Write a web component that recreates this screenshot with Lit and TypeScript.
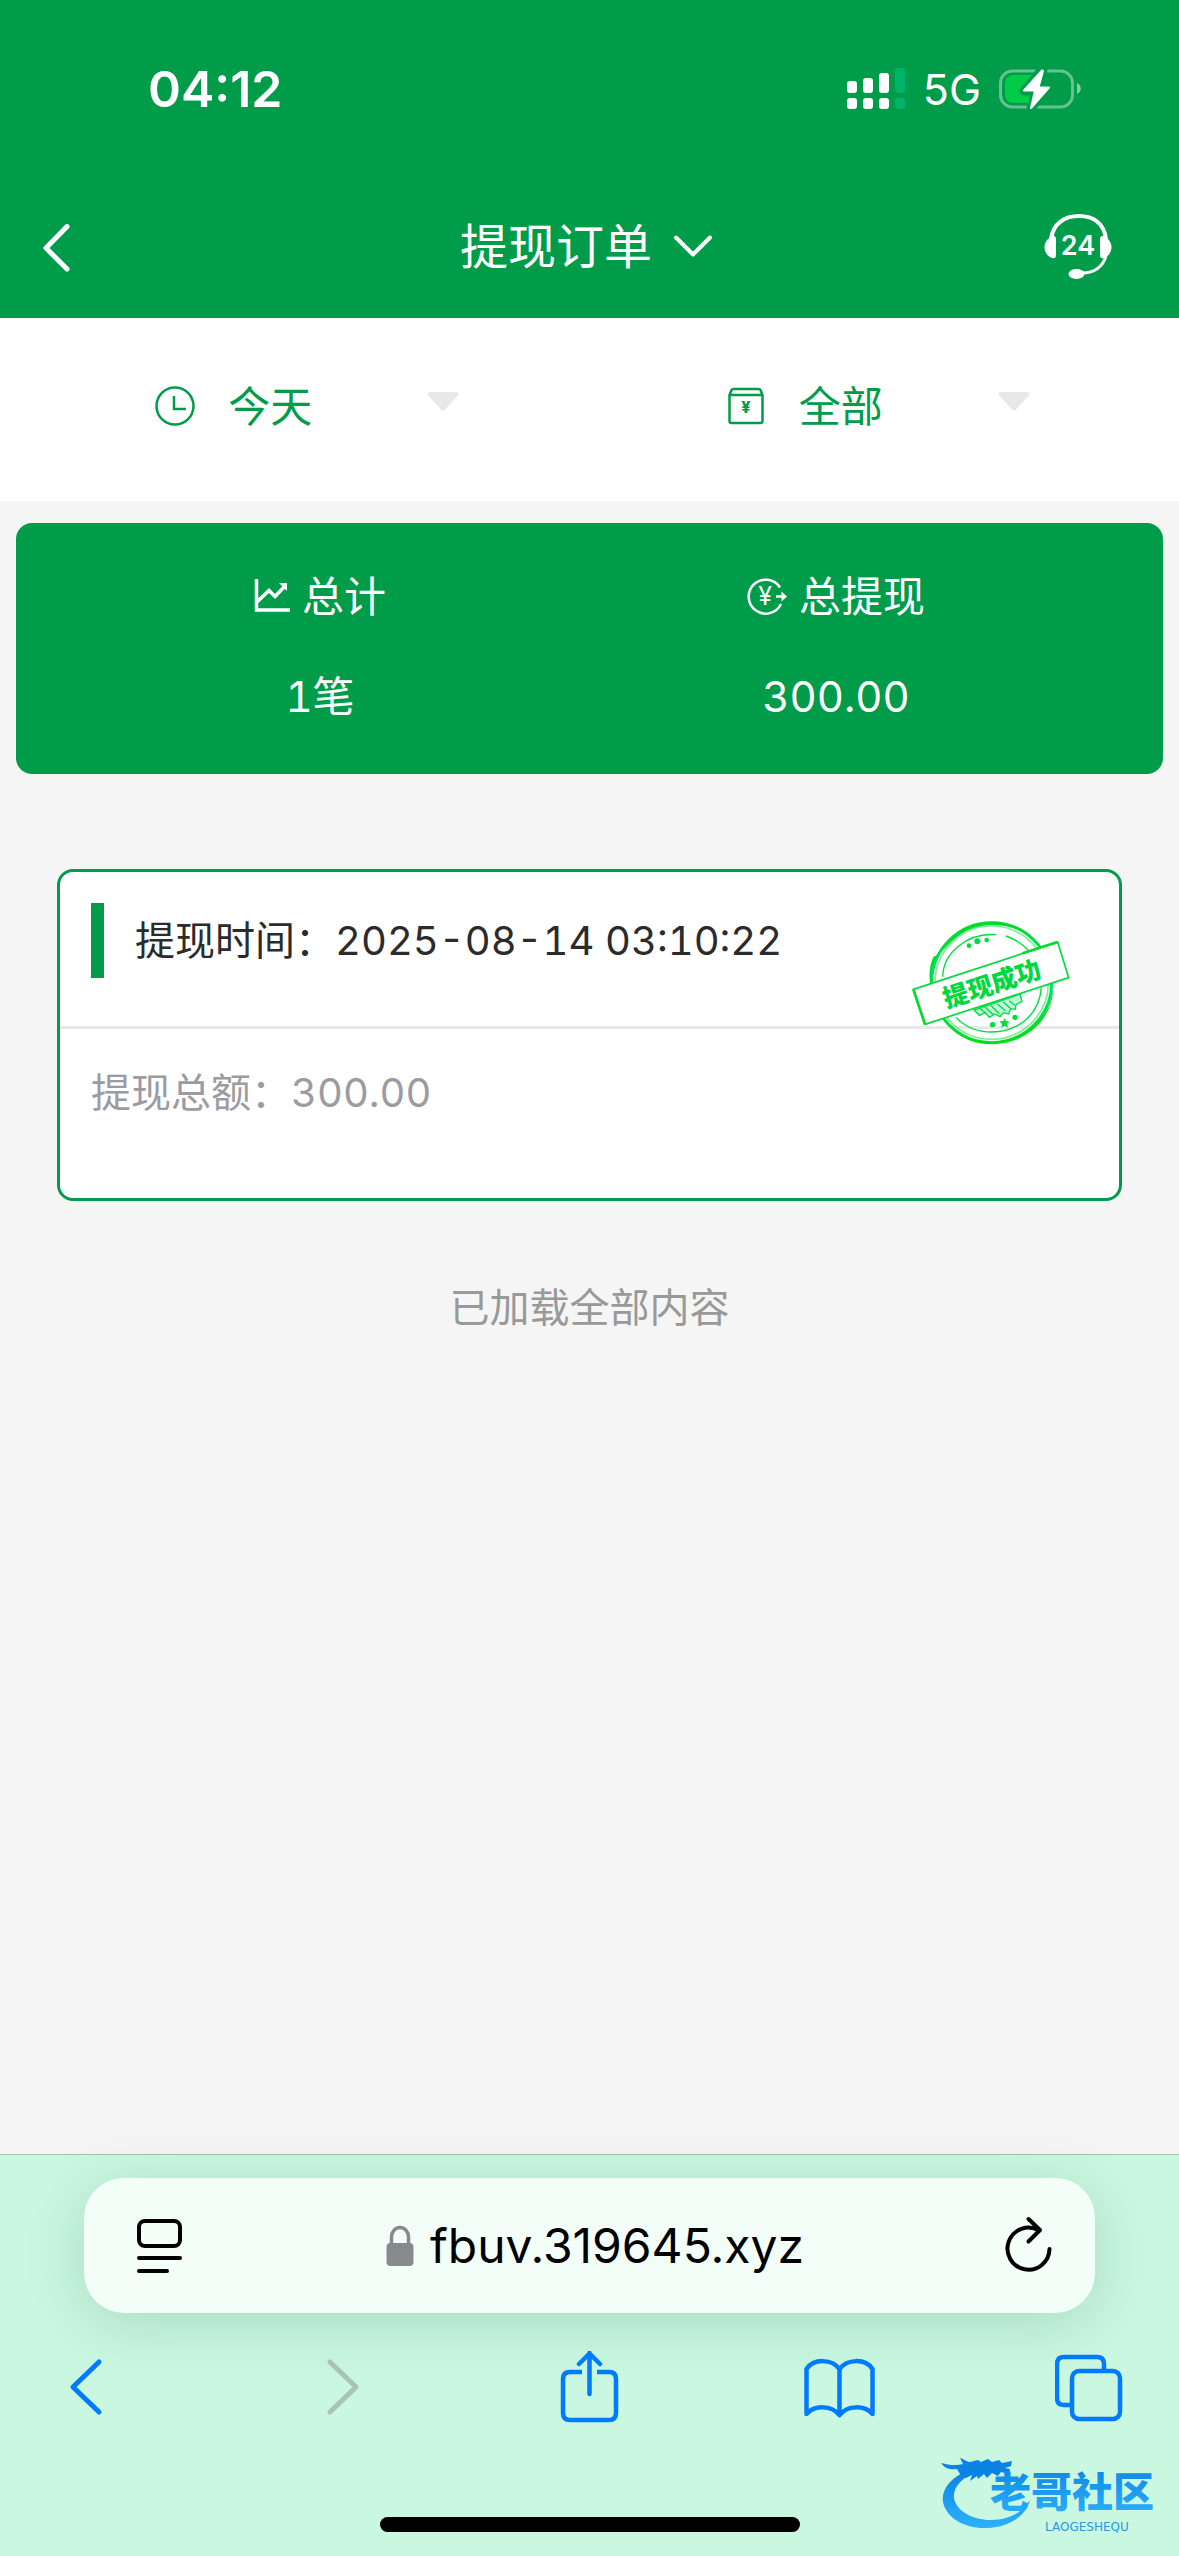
import { LitElement, html, css, svg } from "lit";
import { customElement, property } from "lit/decorators.js";

interface Order {
  time: string;
  amount: string;
}

const iconFont = "Inter, 'Noto Sans CJK SC', sans-serif";

@customElement("status-bar")
class StatusBar extends LitElement {
  static styles = css`
    :host {
      display: flex;
      align-items: center;
      justify-content: space-between;
      height: 178px;
      padding: 0 98px 0 148px;
      color: #fff;
    }
    .time {
      font-size: 50px;
      line-height: 60px;
      font-weight: 600;
    }
    .right {
      display: flex;
      align-items: center;
      gap: 18px;
    }
    .net {
      font-size: 43px;
      line-height: 52px;
    }
    svg {
      display: block;
    }
  `;

  render() {
    const tops = [13, 10, 5, 0];
    return html`
      <span class="time">04:12</span>
      <div class="right">
        <svg width="58" height="42" viewBox="0 0 58 42">
          ${tops.map(
            (top, i) => svg`
              <g fill=${i < 3 ? "#fff" : "#00b36b"}>
                <rect x=${i * 16} y=${top} width="10" height=${25 - top} rx="3"></rect>
                <rect x=${i * 16} y="30" width="10" height="11" rx="3"></rect>
              </g>`
          )}
        </svg>
        <span class="net">5G</span>
        <svg width="82" height="42" viewBox="0 0 82 42">
          <rect x="1.5" y="3" width="72" height="36" rx="12" fill="none" stroke="#fff" stroke-opacity=".4" stroke-width="3"></rect>
          <path d="M78 15v11c5-2 5-9 0-11z" fill="#fff" fill-opacity=".5"></path>
          <path d="M14 7h20v28H14a8 8 0 0 1-8-8V15a8 8 0 0 1 8-8z" fill="#00cc47"></path>
          <path d="M43 1.500 25 23h12L32 40 50 18.500H39L44 2z" fill="#fff" stroke="#009c49" stroke-width="9" stroke-linejoin="round"></path>
          <path d="M43 2.500 25 22.500H36L32 40 50 19.500H39.500L44 3z" fill="#fff" stroke="#fff" stroke-width="2" stroke-linejoin="round"></path>
        </svg>
      </div>
    `;
  }
}

@customElement("page-header")
class PageHeader extends LitElement {
  @property() heading = "";

  static styles = css`
    :host {
      display: grid;
      grid-template-columns: 1fr auto 1fr;
      align-items: center;
      height: 138px;
      padding: 0 66px 2px 39px;
      color: #fff;
    }
    button {
      padding: 0;
      border: 0;
      background: none;
      color: inherit;
      font: inherit;
      cursor: pointer;
    }
    svg {
      display: block;
    }
    .title {
      display: flex;
      align-items: center;
      gap: 20px;
      margin-left: 22px;
    }
    h1 {
      margin: 0;
      font-size: 48px;
      line-height: 60px;
      font-weight: 400;
    }
    .back {
      justify-self: start;
    }
    .service {
      justify-self: end;
    }
  `;

  render() {
    return html`
      <button class="back" aria-label="返回">
        <svg width="34" height="50" viewBox="0 0 34 50" fill="none" stroke="#fff" stroke-width="5" stroke-linecap="round" stroke-linejoin="round">
          <path d="M28 4.500 7 26 28 47"></path>
        </svg>
      </button>
      <button class="title">
        <h1>${this.heading}</h1>
        <svg width="42" height="26" viewBox="0 0 42 26" fill="none" stroke="#fff" stroke-width="4" stroke-linecap="round" stroke-linejoin="round">
          <path d="M4 3.500 21 20.500 38 3.500"></path>
        </svg>
      </button>
      <button class="service" aria-label="客服">
        <svg width="70" height="68" viewBox="0 0 70 68" fill="none" stroke="#fff">
          <path d="M8 26C10 11 21 3 36 3s25 8 27 23" stroke-width="4"></path>
          <path d="M63 43c-3 10-11 17-24 17" stroke-width="3"></path>
          <path d="M9 23.500q4-2 4 3v15q0 5-4 3.500C4 43 1.500 39 1.500 34S5 25 9 23.500zM61 23.500q-4-2-4 3v15q0 5 4 3.500c5-2 7.500-6 7.500-11S65 25 61 23.500z" fill="#fff" stroke="none"></path>
          <ellipse cx="33.500" cy="61" rx="8" ry="5" fill="#fff" stroke="none"></ellipse>
          <text x="35" y="42" text-anchor="middle" font-family=${iconFont} font-weight="600" font-size="27" fill="#fff" stroke="none">24</text>
        </svg>
      </button>
    `;
  }
}

@customElement("order-filters")
class OrderFilters extends LitElement {
  static styles = css`
    :host {
      display: grid;
      grid-template-columns: 1fr 1fr;
      padding: 60px 16px 67px 22px;
      background: #fff;
    }
    .filter {
      display: flex;
      align-items: center;
      justify-content: center;
      height: 56px;
      color: #009c49;
    }
    .icon {
      margin-right: 33px;
    }
    select {
      appearance: none;
      width: 199px;
      height: 56px;
      padding: 0;
      border: 0;
      background: none;
      color: inherit;
      font-family: inherit;
      font-size: 42px;
    }
    .arrow {
      margin-bottom: 10px;
    }
    svg {
      display: block;
    }
  `;

  private arrow() {
    return html`
      <svg class="arrow" width="32" height="20" viewBox="0 0 32 20">
        <path d="M4 1h24c3.500 0 4.500 2 2.500 4L18.500 18c-1.500 2-3.500 2-5 0L1.500 5C-.5 3 .5 1 4 1z" fill="#e8e8e8"></path>
      </svg>
    `;
  }

  render() {
    return html`
      <label class="filter">
        <svg class="icon" width="40" height="40" viewBox="0 0 40 40" fill="none" stroke="currentColor">
          <circle cx="20" cy="20" r="18.500" stroke-width="2.500"></circle>
          <path d="M19 10v13h12" stroke-width="2.500"></path>
        </svg>
        <select aria-label="日期">
          <option>今天</option>
        </select>
        ${this.arrow()}
      </label>
      <label class="filter">
        <svg class="icon" width="40" height="40" viewBox="0 0 40 40" fill="none" stroke="currentColor" stroke-width="2.500">
          <path d="M3.500 9 5.500 4q.5-1 2-1h25q1.500 0 2 1l2 5v26q0 2-2 2h-29q-2 0-2-2zM3.500 9h33"></path>
          <text x="20" y="27" text-anchor="middle" font-family=${iconFont} font-weight="800" font-size="16" fill="currentColor" stroke="none">¥</text>
        </svg>
        <select aria-label="类型">
          <option>全部</option>
        </select>
        ${this.arrow()}
      </label>
    `;
  }
}

@customElement("order-summary")
class OrderSummary extends LitElement {
  @property() count = "";
  @property() total = "";

  static styles = css`
    :host {
      display: grid;
      grid-template-columns: 1fr 1fr;
      margin: 22px 16px 0;
      padding: 44px 69px 47px 46px;
      border-radius: 16px;
      background: #009c49;
      color: #fff;
      font-size: 42px;
      line-height: 60px;
      font-variant-numeric: tabular-nums;
    }
    .item {
      display: flex;
      flex-direction: column;
      align-items: center;
      gap: 40px;
    }
    .label {
      display: flex;
      align-items: center;
      gap: 12px;
    }
    svg {
      display: block;
    }
  `;

  render() {
    return html`
      <div class="item">
        <div class="label">
          <svg width="36" height="36" viewBox="0 0 36 36" fill="none" stroke="#fff" stroke-width="3.500">
            <path d="M2.500 0v31H36M3 23 15 11.500 21 17.500 32 6"></path>
            <path d="M25 4h8v8z" fill="#fff" stroke="none"></path>
          </svg>
          <span>总计</span>
        </div>
        <div>${this.count}笔</div>
      </div>
      <div class="item">
        <div class="label">
          <svg width="40" height="38" viewBox="0 0 40 38" fill="none" stroke="#fff" stroke-width="2.500">
            <path d="M33 9.500A17 17 0 1 0 34 26"></path>
            <path d="M29 18.500h8"></path>
            <path d="M34.500 13.500 40 18.500l-5.500 5z" fill="#fff" stroke="none"></path>
            <text x="18" y="27" text-anchor="middle" font-family=${iconFont} font-size="25" fill="#fff" stroke="none">¥</text>
          </svg>
          <span>总提现</span>
        </div>
        <div>${this.total}</div>
      </div>
    `;
  }
}

@customElement("order-card")
class OrderCard extends LitElement {
  @property({ attribute: false }) order: Order = { time: "", amount: "" };

  static styles = css`
    :host {
      display: block;
      position: relative;
      margin: 95px 57px 0;
      border: 3px solid #009c49;
      border-radius: 16px;
      background: #fff;
      font-size: 40px;
      line-height: 56px;
      font-variant-numeric: tabular-nums;
    }
    .head {
      display: flex;
      align-items: center;
      gap: 31px;
      padding: 31px 31px 48px;
      border-bottom: 3px solid #e8e8e8;
      color: #2b2b2b;
    }
    .bar {
      width: 13px;
      height: 75px;
      background: #009c49;
    }
    .body {
      padding: 36px 31px 77px;
      color: #9b9ba1;
    }
    .stamp {
      position: absolute;
      top: 49px;
      right: 49px;
    }
  `;

  render() {
    return html`
      <div class="head">
        <span class="bar"></span>
        <span>提现时间：${this.order.time}</span>
      </div>
      <div class="body">提现总额：${this.order.amount}</div>
      <svg class="stamp" width="158" height="124" viewBox="98 185 474 372" fill="none" stroke="#00dc3c" role="img" aria-label="提现成功">
        <defs>
          <linearGradient id="ink" x1="0" y1="0" x2="0" y2="1">
            <stop offset="0" stop-color="#00dc28"></stop>
            <stop offset=".5" stop-color="#00e070"></stop>
            <stop offset="1" stop-color="#00e018"></stop>
          </linearGradient>
        </defs>
        <circle cx="337" cy="370" r="180" stroke="url(#ink)" stroke-width="9"></circle>
        <circle cx="337" cy="370" r="170" stroke-width="5" stroke-opacity=".5"></circle>
        <path d="M157 372c-4-34 2-60 18-86l-12 6c-12 22-14 50-11 80z" fill="#00dc28" stroke="none"></path>
        <path d="M190 275c24-45 75-82 140-85 35-1 62 5 92 20-60-18-110-18-155 2-34 16-55 38-77 63z" fill="#00dc28" stroke="none"></path>
        <path d="M360 545c60-8 128-50 152-112l8-44c4 70-60 155-160 162z" fill="#00e018" stroke="none"></path>
        <path d="M190 352c2-70 70-132 160-126M380 230c34 12 56 28 72 50M486 384c-6 90-80 134-148 134-46 0-80-14-108-44" stroke-width="4"></path>
        <g fill="#00dc3c" stroke="none">
          <circle cx="269" cy="259" r="7"></circle>
          <circle cx="294" cy="246" r="9"></circle>
          <circle cx="322" cy="242" r="7"></circle>
          <circle cx="340" cy="496" r="8"></circle>
          <path d="m376 476 4 10 11 0-8 8 3 11-10-6-10 6 2-11-8-8 12-1z"></path>
          <circle cx="407" cy="474" r="8"></circle>
        </g>
        <path d="M284 452 300 468 318 460 330 474 346 464 362 472 372 460 388 464 394 448 408 450 410 436 428 426 422 404z" fill="#00e070" fill-opacity=".25" stroke-width="4"></path>
        <path d="m302 448 18 14m-4-20 26 24m-8-28 26 26m-6-30 24 20m-6-26 20 18m-2-22 16 14" stroke-width="4"></path>
        <path d="M102 390 535 248 568 355 137 495z" fill="#fff" stroke-width="5"></path>
        <path d="M102 390 137 495M430 282 535 248" stroke="#00dc28" stroke-width="8"></path>
        <text x="338" y="401" text-anchor="middle" transform="rotate(-18 338 374)" font-family="'Noto Sans CJK SC', sans-serif" font-weight="900" font-size="76" fill="#00d840" stroke="none">提现成功</text>
      </svg>
    `;
  }
}

@customElement("browser-bar")
class BrowserBar extends LitElement {
  static styles = css`
    :host {
      display: block;
      position: relative;
      padding: 23px 52px 24px;
      border-top: 1px solid #9fc3b1;
      background: #c9f7e0;
    }
    button {
      padding: 0;
      border: 0;
      background: none;
      cursor: pointer;
    }
    svg {
      display: block;
    }
    .field {
      display: flex;
      align-items: center;
      justify-content: space-between;
      height: 135px;
      margin: 0 32px;
      padding: 0 42px 0 51px;
      border-radius: 40px;
      background: #f4fef9;
      box-shadow: 0 10px 60px rgba(0, 60, 30, 0.15);
    }
    .address {
      display: flex;
      align-items: center;
      gap: 16px;
      color: #000;
      font-size: 48px;
      line-height: 60px;
      text-decoration: none;
    }
    .tools {
      display: flex;
      justify-content: space-between;
      margin-top: 38px;
    }
    .home {
      width: 36%;
      min-width: 420px;
      height: 15px;
      margin: 94px auto 0;
      border-radius: 8px;
      background: #000;
    }
    .mark {
      position: absolute;
      right: 14px;
      bottom: 22px;
    }
  `;

  render() {
    return html`
      <div class="field">
        <button aria-label="阅读器">
          <svg width="50" height="60" viewBox="0 0 50 60" fill="none" stroke="#000" stroke-width="4" stroke-linecap="round">
            <rect x="4" y="5" width="41" height="25" rx="6"></rect>
            <path d="M4 42h41M4 55h28"></path>
          </svg>
        </button>
        <a class="address" href="#">
          <svg width="28" height="42" viewBox="0 0 28 42">
            <path d="M5.500 20v-8a8.500 9.500 0 0 1 17 0v8" fill="none" stroke="#868a8d" stroke-width="3.500"></path>
            <rect x="0.500" y="18" width="27" height="23" rx="4" fill="#868a8d"></rect>
          </svg>
          <span>fbuv.319645.xyz</span>
        </a>
        <button aria-label="刷新">
          <svg width="48" height="60" viewBox="0 0 48 60" fill="none" stroke="#000" stroke-width="4" stroke-linecap="round" stroke-linejoin="round">
            <path d="M34 14.500A21 21 0 1 0 44.500 33"></path>
            <path d="M23.500 3 35 14 23.500 25.500"></path>
          </svg>
        </button>
      </div>
      <nav class="tools">
        <button aria-label="后退">
          <svg width="72" height="72" viewBox="0 0 72 72" fill="none" stroke="#007aff" stroke-width="5" stroke-linecap="round" stroke-linejoin="round">
            <path d="M47 11 21 36 47 61"></path>
          </svg>
        </button>
        <button aria-label="前进">
          <svg width="72" height="72" viewBox="0 0 72 72" fill="none" stroke="#a9c3b6" stroke-width="5" stroke-linecap="round" stroke-linejoin="round">
            <path d="M27 11 53 36 27 61"></path>
          </svg>
        </button>
        <button aria-label="分享">
          <svg width="72" height="72" viewBox="0 0 72 72" fill="none" stroke="#007aff" stroke-width="4.500" stroke-linecap="round" stroke-linejoin="round">
            <path d="M28 21h-12q-7 0-7 7v34q0 7 7 7h39q7 0 7-7V28q0-7-7-7H43" stroke-linecap="butt"></path>
            <path d="M35.500 43V2M25 13 35.500 2.500 46 13"></path>
          </svg>
        </button>
        <button aria-label="书签">
          <svg width="72" height="72" viewBox="0 0 72 72" fill="none" stroke="#007aff" stroke-width="4.500" stroke-linecap="round" stroke-linejoin="round">
            <path d="M35.500 18C28 8 10 7 2.500 18v45c8-9 25-9 33 1V18C43 8 61 7 68.500 18v45c-8-9-25-9-33 1"></path>
          </svg>
        </button>
        <button aria-label="标签页">
          <svg width="72" height="72" viewBox="0 0 72 72" fill="none" stroke="#007aff" stroke-width="4.500" stroke-linejoin="round">
            <path d="M17 54H9q-7 0-7-7V13q0-7 7-7h33q7 0 7 7v7"></path>
            <rect x="17" y="20" width="48" height="48" rx="7"></rect>
          </svg>
        </button>
      </nav>
      <div class="home"></div>
      <svg class="mark" width="224" height="80" viewBox="0 0 224 80">
        <defs>
          <linearGradient id="wave" x1="0" y1="0" x2="0" y2="1">
            <stop offset="0" stop-color="#0a80e2"></stop>
            <stop offset="1" stop-color="#2cb2fc"></stop>
          </linearGradient>
        </defs>
        <path d="M32 15C13 20 0 34 2 48c3 16 22 27 44 26 22-1 39-12 43-28-9 14-22 20-39 20-20 0-35-10-37-22-1-11 8-21 22-25z" fill="url(#wave)"></path>
        <path d="M0 9c8 2 14 3 22 1l-3-6c4 1 7 4 10 4l8-2 3 2 7-3 4 3 7-2 3 3 10-2-1 5-6 2 5 1-1 5-8-2-3 4-6-3-5 5-3-4-6 5-1-3-7 5 2-6-6 3c-5-2-7-5-9-9-6 1-12 0-16-6z" fill="#0a84e4"></path>
        <text x="49" y="53" font-family="'Noto Sans CJK SC', sans-serif" font-weight="900" font-size="41" fill="url(#wave)">老哥社区</text>
        <text x="104" y="77" font-family="'DejaVu Sans', sans-serif" font-size="12" fill="#2a98e0">LAOGESHEQU</text>
      </svg>
    `;
  }
}

@customElement("app-root")
class AppRoot extends LitElement {
  private orders: Order[] = [{ time: "2025-08-14 03:10:22", amount: "300.00" }];

  static styles = css`
    :host {
      display: flex;
      flex-direction: column;
      min-height: 100vh;
      background: #f5f5f5;
      font-family: Inter, "Noto Sans CJK SC", sans-serif;
    }
    .top {
      background: #009c49;
    }
    main {
      flex: 1;
    }
    .end {
      margin: 79px 0 0;
      color: #999;
      font-size: 40px;
      line-height: 56px;
      text-align: center;
    }
  `;

  render() {
    return html`
      <header class="top">
        <status-bar></status-bar>
        <page-header heading="提现订单"></page-header>
      </header>
      <main>
        <order-filters></order-filters>
        <order-summary count="1" total="300.00"></order-summary>
        ${this.orders.map((order) => html`<order-card .order=${order}></order-card>`)}
        <p class="end">已加载全部内容</p>
      </main>
      <browser-bar></browser-bar>
    `;
  }
}
